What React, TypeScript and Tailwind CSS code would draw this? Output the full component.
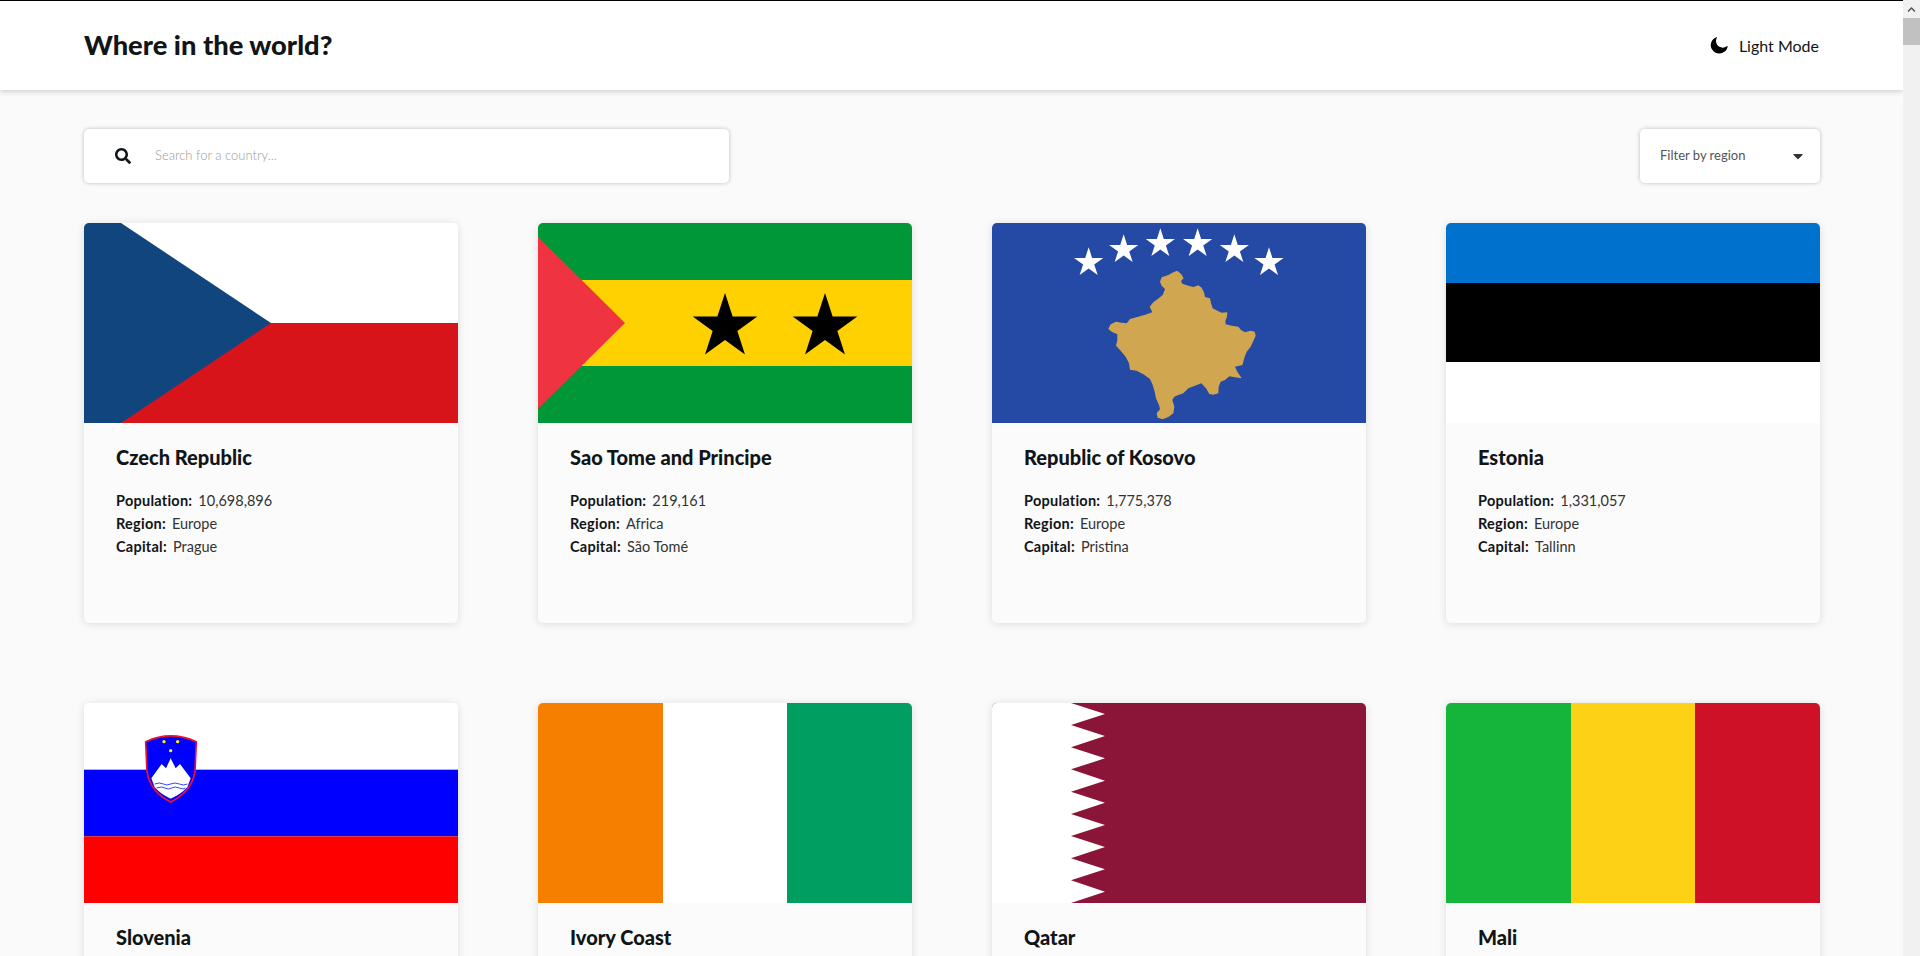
import React from "react";
import { FaMoon, FaSearch, FaCaretDown, FaChevronUp } from "react-icons/fa";

// 5 point star as svg points
const starPoints = (cx: number, cy: number, r: number): string => {
  const pts: string[] = [];
  for (let i = 0; i < 10; i++) {
    const rad = i % 2 === 0 ? r : r * 0.382;
    const a = -Math.PI / 2 + (i * Math.PI) / 5;
    pts.push(`${cx + rad * Math.cos(a)},${cy + rad * Math.sin(a)}`);
  }
  return pts.join(" ");
};

const CzechFlag = () => (
  <svg viewBox="0 0 374 200" className="block w-full h-full">
    <rect width="374" height="100" fill="#ffffff" />
    <rect y="100" width="374" height="100" fill="#d7141a" />
    <polygon points="0,0 37,0 187,100 37,200 0,200" fill="#11457e" />
  </svg>
);

const SaoTomeFlag = () => (
  <svg viewBox="24 24 1122 600" className="block w-full h-full">
    <rect x="24" y="24" width="1122" height="600" fill="#009739" />
    <rect x="24" y="195" width="1122" height="258" fill="#ffd100" />
    <polygon points="24,65 285,324 24,582" fill="#ef3340" />
    <polygon points={starPoints(585, 336, 102)} fill="#000000" />
    <polygon points={starPoints(885, 336, 102)} fill="#000000" />
  </svg>
);

const KosovoFlag = () => (
  <svg viewBox="36 24 1122 600" className="block w-full h-full">
    <rect x="36" y="24" width="1122" height="600" fill="#244aa5" />
    {[
      [326, 143],
      [431, 104],
      [541, 86],
      [653, 86],
      [763, 104],
      [867, 143],
    ].map(([x, y]) => (
      <polygon key={x} points={starPoints(x, y, 46)} fill="#ffffff" />
    ))}
    <polygon
      fill="#d0a650"
      points="592,167 604,178 611,190 603,198 607,206 625,212 640,216 655,211 665,218 672,232 675,246 690,250 693,265 698,280 712,287 725,293 742,292 741,305 736,318 737,328 755,332 775,335 783,345 795,352 812,347 824,350 827,362 820,378 812,395 800,410 794,425 790,440 787,450 765,455 772,470 785,490 765,487 748,484 735,495 722,500 716,515 715,535 700,539 688,537 678,520 664,505 645,512 625,520 610,535 595,540 583,545 577,555 583,575 580,595 565,606 548,613 533,608 530,595 540,583 537,570 528,550 524,530 518,510 510,492 490,478 470,467 450,464 447,445 437,425 420,405 408,392 412,375 412,358 395,350 385,342 392,328 408,320 425,323 440,325 450,312 475,305 500,298 517,292 509,275 520,262 538,248 548,240 555,222 545,212 540,200 545,187 565,180 580,172"
    />
  </svg>
);

const EstoniaFlag = () => (
  <div className="flex flex-col h-full">
    <div className="h-[60px] bg-[#0072ce]" />
    <div className="h-[79px] bg-black" />
    <div className="flex-1 bg-white" />
  </div>
);

const SloveniaFlag = () => (
  <svg viewBox="12 9 1122 600" className="block w-full h-full">
    <rect x="12" y="9" width="1122" height="200" fill="#ffffff" />
    <rect x="12" y="209" width="1122" height="200" fill="#0000ff" />
    <rect x="12" y="409" width="1122" height="200" fill="#ff0000" />
    <path
      d="M197 125 Q272 90 349 125 L345 215 Q335 275 272 306 Q210 275 201 215 Z"
      fill="#0000ff"
      stroke="#ee1133"
      strokeWidth="5"
    />
    <path
      d="M214 235 L245 192 L258 205 L272 175 L287 205 L300 192 L332 235 L322 262 Q300 285 272 296 Q245 285 224 262 Z"
      fill="#ffffff"
    />
    <path d="M224 252 Q240 246 250 252 T272 252 T298 252 T322 252" fill="none" stroke="#3344ff" strokeWidth="3" />
    <path d="M230 264 Q245 258 255 264 T275 264 T298 264 T316 264" fill="none" stroke="#3344ff" strokeWidth="3" />
    <circle cx="252" cy="125" r="5" fill="#ffee00" />
    <circle cx="293" cy="125" r="5" fill="#ffee00" />
    <circle cx="272" cy="152" r="5" fill="#ffee00" />
  </svg>
);

const IvoryCoastFlag = () => (
  <div className="grid grid-cols-3 h-full">
    <div className="bg-[#f77f00]" />
    <div className="bg-white" />
    <div className="bg-[#009e60]" />
  </div>
);

const QatarFlag = () => (
  <svg viewBox="21 9 1122 600" className="block w-full h-full">
    <rect x="21" y="9" width="1122" height="600" fill="#8a1538" />
    <polygon
      fill="#ffffff"
      points="21,9 258,9 360,42 258,75 360,108 258,142 360,175 258,208 360,242 258,275 360,308 258,342 360,375 258,408 360,441 258,475 360,508 258,541 360,575 258,609 21,609"
    />
  </svg>
);

const MaliFlag = () => (
  <div className="grid grid-cols-3 h-full">
    <div className="bg-[#14b53a]" />
    <div className="bg-[#fcd116]" />
    <div className="bg-[#ce1126]" />
  </div>
);

type Country = {
  name: string;
  flag: React.ReactNode;
  population?: string;
  region?: string;
  capital?: string;
};

const countries: Country[] = [
  { name: "Czech Republic", flag: <CzechFlag />, population: "10,698,896", region: "Europe", capital: "Prague" },
  { name: "Sao Tome and Principe", flag: <SaoTomeFlag />, population: "219,161", region: "Africa", capital: "São Tomé" },
  { name: "Republic of Kosovo", flag: <KosovoFlag />, population: "1,775,378", region: "Europe", capital: "Pristina" },
  { name: "Estonia", flag: <EstoniaFlag />, population: "1,331,057", region: "Europe", capital: "Tallinn" },
  { name: "Slovenia", flag: <SloveniaFlag /> },
  { name: "Ivory Coast", flag: <IvoryCoastFlag /> },
  { name: "Qatar", flag: <QatarFlag /> },
  { name: "Mali", flag: <MaliFlag /> },
];

const Stat = ({ label, value }: { label: string; value: string }) => (
  <p className="text-[14.5px] leading-[23px] text-[#333]">
    <span className="font-bold tracking-[0.25px] text-[#111517] mr-[6px]">{label}:</span>
    {value}
  </p>
);

const Card = ({ country }: { country: Country }) => (
  <div className="h-[400px] rounded-[5px] overflow-hidden bg-[#fbfbfb] shadow-[0_1px_8px_rgba(0,0,0,0.12)]">
    <div className="h-[200px]">{country.flag}</div>
    <div className="pl-[32px] pt-[21px]">
      <h2 className="text-[20px] leading-[26px] font-black text-[#111517] mb-[19px]">{country.name}</h2>
      {country.population && <Stat label="Population" value={country.population} />}
      {country.region && <Stat label="Region" value={country.region} />}
      {country.capital && <Stat label="Capital" value={country.capital} />}
    </div>
  </div>
);

export default function App() {
  return (
    <div className="flex h-[956px] overflow-hidden font-['Lato',sans-serif] bg-[#fafafa]">
      <main className="flex-1 min-w-0">
        <header className="h-[90px] flex items-center justify-between pl-[84px] pr-[84px] bg-white border-t border-black shadow-[0_2px_5px_rgba(0,0,0,0.16)]">
          <h1 className="text-[27.3px] font-black text-[#111517]">Where in the world?</h1>
          <div className="flex items-center gap-[12px] text-[16px] text-[#111517]">
            <FaMoon className="text-black w-[17px] h-[17px] -rotate-[30deg]" />
            <span>Light Mode</span>
          </div>
        </header>

        <section className="pl-[84px] pr-[83px] pt-[39px]">
          <div className="flex justify-between">
            <div className="w-[645px] h-[54px] flex items-center pl-[31px] bg-white rounded-[5px] shadow-[0_0_4px_rgba(0,0,0,0.25)]">
              <FaSearch className="w-[16px] h-[16px] text-[#111517]" />
              <span className="ml-[24px] text-[13px] font-light text-[#9a9a9a]">Search for a country...</span>
            </div>
            <div className="w-[180px] h-[54px] flex items-center justify-between pl-[20px] pr-[14px] bg-white rounded-[5px] shadow-[0_0_4px_rgba(0,0,0,0.25)]">
              <span className="text-[13px] text-[#555]">Filter by region</span>
              <FaCaretDown className="w-[16px] h-[16px] text-[#333]" />
            </div>
          </div>

          <div className="mt-[40px] grid grid-cols-4 gap-[80px]">
            {countries.map((c) => (
              <Card key={c.name} country={c} />
            ))}
          </div>
        </section>
      </main>

      {/* scrollbar */}
      <aside className="w-[17px] bg-[#f1f1f1] flex flex-col">
        <div className="h-[18px] flex items-center justify-center">
          <FaChevronUp className="w-[9px] h-[9px] text-[#505050]" />
        </div>
        <div className="h-[27px] bg-[#c1c1c1]" />
      </aside>
    </div>
  );
}
